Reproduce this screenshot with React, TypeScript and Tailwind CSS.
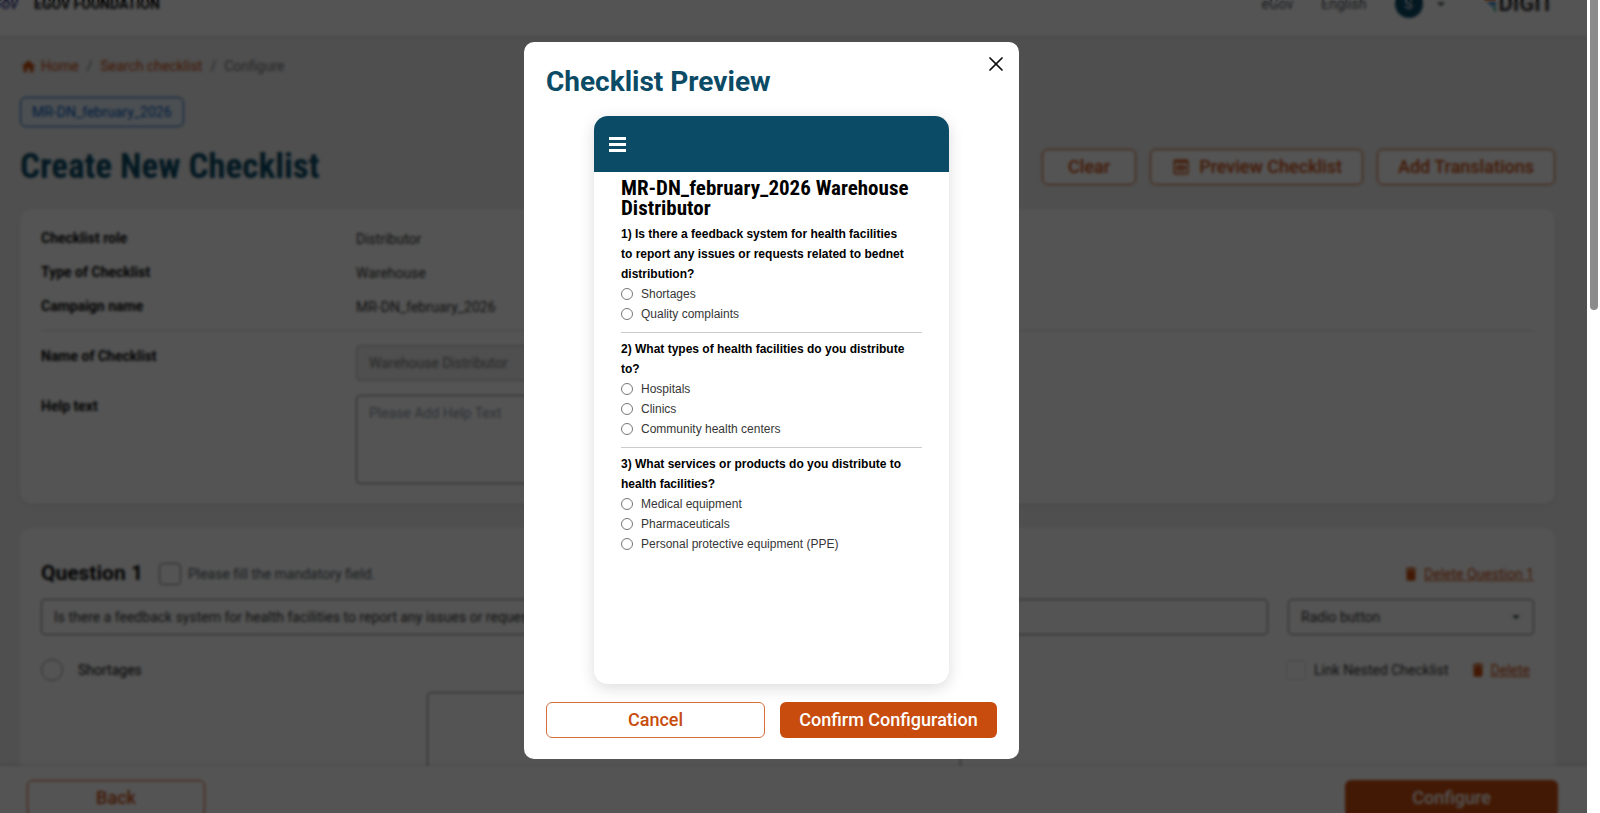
import { X } from 'lucide-react';
import { MdArrowDropDown, MdDelete, MdHome, MdPreview } from 'react-icons/md';

const questions = [
  {
    title: 'Is there a feedback system for health facilities to report any issues or requests related to bednet distribution?',
    options: ['Shortages', 'Quality complaints'],
  },
  {
    title: 'What types of health facilities do you distribute to?',
    options: ['Hospitals', 'Clinics', 'Community health centers'],
  },
  {
    title: 'What services or products do you distribute to health facilities?',
    options: ['Medical equipment', 'Pharmaceuticals', 'Personal protective equipment (PPE)'],
  },
];

const details = [
  { label: 'Checklist role', value: 'Distributor' },
  { label: 'Type of Checklist', value: 'Warehouse' },
  { label: 'Campaign name', value: 'MR-DN_february_2026' },
];

function Header() {
  return (
    <header className="flex items-center justify-between h-16 -mt-7 shrink-0 bg-white pr-[33px] shadow">
      <div className="flex items-center gap-4">
        <span className="w-[18px] flex justify-end text-base italic font-medium text-[#3b3f8f]">
          <span className="text-orange-500">e</span>Gov
        </span>
        <span className="text-sm font-bold text-[#0b0c0c]">EGOV FOUNDATION</span>
      </div>
      <div className="flex items-center text-sm text-[#505a5f]">
        <span className="mr-7">eGov</span>
        <span className="mr-7">English</span>
        <span className="flex items-center justify-center size-7 rounded-full bg-[#0b4b66] font-medium text-gray-300">
          S
        </span>
        <MdArrowDropDown size={20} className="ml-2 mr-8" />
        <svg width="14" height="20" viewBox="0 0 14 20">
          <path d="M1 3h12v4H1z" fill="#f47738" />
          <path d="M4 8h9v4H8z" fill="#3b8fd4" />
          <path d="M9 13h4v6z" fill="#2ca58d" />
        </svg>
        <span className="ml-0.5 text-[22px] font-bold text-[#363636]">DIGIT</span>
      </div>
    </header>
  );
}

function OutlineButton({ children }: { children: React.ReactNode }) {
  return (
    <button className="flex items-center justify-center gap-2 h-9 min-w-[94px] px-5 rounded-md border border-[#c84c0e] bg-white text-lg font-medium text-[#c84c0e]">
      {children}
    </button>
  );
}

function DeleteLink({ label }: { label: string }) {
  return (
    <a href="#" className="flex items-center gap-1 text-sm text-[#c84c0e] underline">
      <MdDelete size={18} />
      {label}
    </a>
  );
}

function ChecklistDetails() {
  return (
    <section className="mt-6 rounded-xl bg-white px-[21px] pt-[18px] pb-5 shadow-sm">
      <dl className="pb-px">
        {details.map(({ label, value }) => (
          <div key={label} className="flex items-start h-[34px] text-sm leading-[22px]">
            <dt className="w-[315px] font-bold text-[#0b0c0c]">{label}</dt>
            <dd className="mt-px text-[#363636]">{value}</dd>
          </div>
        ))}
      </dl>
      <hr className="border-[#d6d5d4]" />
      <div className="flex items-start mt-[14px]">
        <label htmlFor="name" className="w-[315px] font-bold text-sm leading-[22px] text-[#0b0c0c]">
          Name of Checklist
        </label>
        <input
          id="name"
          disabled
          defaultValue="Warehouse Distributor"
          className="w-[600px] h-9 px-3 rounded border border-[#b1b4b6] bg-[#eeeeee] text-sm text-[#787878]"
        />
      </div>
      <div className="flex items-start mt-[14px]">
        <label htmlFor="help" className="w-[315px] font-bold text-sm leading-[22px] text-[#0b0c0c]">
          Help text
        </label>
        <textarea
          id="help"
          placeholder="Please Add Help Text"
          className="w-[600px] h-[89px] px-3 py-[6px] resize-none rounded border border-[#787878] text-sm leading-[22px] placeholder:text-[#8d97a5]"
        />
      </div>
    </section>
  );
}

function QuestionCard() {
  return (
    <section className="flex-1 min-h-0 mt-6 rounded-t-xl bg-white px-[21px] pt-[34px]">
      <div className="flex items-center justify-between h-6">
        <div className="flex items-center">
          <h2 className="text-[21px] font-bold text-[#0b0c0c]">Question 1</h2>
          <label className="flex items-center gap-[7px] ml-4 text-sm text-[#505a5f]">
            <input type="checkbox" className="size-[22px] appearance-none rounded-sm border border-[#787878]" />
            Please fill the mandatory field.
          </label>
        </div>
        <DeleteLink label="Delete Question 1" />
      </div>
      <div className="flex gap-5 mt-[13px]">
        <input
          aria-label="Question 1"
          defaultValue={questions[0].title}
          className="flex-1 h-9 px-3 rounded border border-[#787878] text-sm text-[#363636]"
        />
        <div className="relative w-[246px]">
          <select
            aria-label="Answer type"
            className="w-full h-9 px-3 appearance-none rounded border border-[#787878] text-sm text-[#363636]"
          >
            <option>Radio button</option>
          </select>
          <MdArrowDropDown size={20} className="absolute right-2 top-2 text-[#505a5f] pointer-events-none" />
        </div>
      </div>
      <div className="flex items-center justify-between h-6 mt-[23px] pr-1">
        <label className="flex items-center gap-[15px] text-sm text-[#0b0c0c]">
          <input type="radio" className="size-[22px] appearance-none rounded-full border border-[#8c8c8c]" />
          Shortages
        </label>
        <div className="flex items-center gap-5">
          <label className="flex items-center gap-2 text-sm text-[#363636]">
            <input type="checkbox" className="size-5 appearance-none rounded-sm border border-[#d6d5d4]" />
            Link Nested Checklist
          </label>
          <DeleteLink label="Delete" />
        </div>
      </div>
      <textarea
        aria-label="Comment"
        className="block w-[534px] h-[120px] mt-[10px] ml-[386px] resize-none rounded border border-[#787878]"
      />
    </section>
  );
}

function PhonePreview() {
  return (
    <div className="w-[355px] h-[568px] mx-auto rounded-[14px] overflow-hidden bg-white shadow-[0_4px_16px_rgba(0,0,0,0.14)]">
      <div className="flex items-center h-14 pl-[15px] bg-[#0b4b66]">
        <button aria-label="Menu" className="flex flex-col gap-[3px] w-[17px]">
          <span className="h-[3px] w-full bg-white" />
          <span className="h-[3px] w-full bg-white" />
          <span className="h-[3px] w-full bg-white" />
        </button>
      </div>
      <div className="px-[27px] pt-[6px]">
        <h3 className="font-['Roboto_Condensed',Roboto,sans-serif] text-[21px] leading-5 font-bold text-black">
          MR-DN_february_2026 Warehouse Distributor
        </h3>
        <div className="mt-[6px] divide-y divide-[#cccccc] font-['Liberation_Sans',Arial,sans-serif] text-xs leading-5">
          {questions.map((q, i) => (
            <div key={q.title} role="radiogroup" className="pt-[6px] pb-2 first:pt-0">
              <p className="pr-4 font-bold text-black">{`${i + 1}) ${q.title}`}</p>
              {q.options.map((option) => (
                <label key={option} className="flex items-center gap-2 text-[#363636]">
                  <input type="radio" name={`question-${i}`} className="size-3" />
                  {option}
                </label>
              ))}
            </div>
          ))}
        </div>
      </div>
    </div>
  );
}

function PreviewModal() {
  return (
    <div className="absolute inset-0 flex items-center justify-center pr-11 pb-3 bg-black/67 backdrop-blur-[1.5px]">
      <div
        role="dialog"
        aria-labelledby="modal-title"
        className="relative w-[495px] rounded-[10px] bg-white px-[22px] pt-6 pb-[21px]"
      >
        <button aria-label="Close" className="absolute top-2.5 right-[11px] text-[#0b0c0c]">
          <X size={24} strokeWidth={1.75} />
        </button>
        <h1 id="modal-title" className="mb-[18px] text-[28px] leading-8 font-bold text-[#0b4b66]">
          Checklist Preview
        </h1>
        <PhonePreview />
        <div className="flex gap-[15px] mt-[18px]">
          <button className="flex-1 h-9 rounded-md border border-[#c84c0e]/80 text-lg font-medium text-[#c84c0e]">
            Cancel
          </button>
          <button className="flex-1 h-9 rounded-md bg-[#c84c0e] text-lg font-medium text-white">
            Confirm Configuration
          </button>
        </div>
      </div>
    </div>
  );
}

export default function App() {
  return (
    <div className="flex h-screen overflow-hidden bg-white font-[Roboto,sans-serif]">
      <div className="relative flex flex-col flex-1 min-w-0 overflow-hidden bg-[#eeeeee]">
        <Header />
        <main className="flex flex-col flex-1 min-h-0 pl-5 pr-8 pt-[18px]">
          <nav className="flex items-center h-6 text-sm text-[#787878]">
            <MdHome size={17} className="mr-1 text-[#c84c0e]" />
            <a href="#" className="text-[#c84c0e]">Home</a>
            <span className="mx-2">/</span>
            <a href="#" className="text-[#c84c0e]">Search checklist</a>
            <span className="mx-2">/</span>
            <span>Configure</span>
          </nav>
          <div className="self-start mt-[19px] h-[30px] px-[11px] rounded-md border border-[#0057bd] bg-[#e6f0f8] text-sm leading-7 text-[#0057bd]">
            MR-DN_february_2026
          </div>
          <div className="flex items-center justify-between mt-[22px] h-9">
            <h1 className="font-['Roboto_Condensed',Roboto,sans-serif] text-[35px] font-bold text-[#0b4b66]">
              Create New Checklist
            </h1>
            <div className="flex gap-[14px]">
              <OutlineButton>Clear</OutlineButton>
              <OutlineButton>
                <MdPreview size={20} />
                Preview Checklist
              </OutlineButton>
              <OutlineButton>Add Translations</OutlineButton>
            </div>
          </div>
          <ChecklistDetails />
          <QuestionCard />
        </main>
        <footer className="relative flex items-start justify-between shrink-0 h-[47px] pt-[14px] pl-[27px] pr-[29px] bg-white shadow-[0_-1px_3px_rgba(0,0,0,0.16)]">
          <button className="w-[178px] h-9 shrink-0 rounded-md border border-[#c84c0e] text-lg font-medium text-[#c84c0e]">
            Back
          </button>
          <button className="w-[213px] h-9 shrink-0 rounded-md bg-[#c84c0e] text-lg font-medium text-white">
            Configure
          </button>
        </footer>
        <PreviewModal />
      </div>
      <div className="w-[13px] pl-[3px] pr-0.5 bg-white">
        <div className="h-[310px] rounded-b-full bg-[#8b8b8b]" />
      </div>
    </div>
  );
}
